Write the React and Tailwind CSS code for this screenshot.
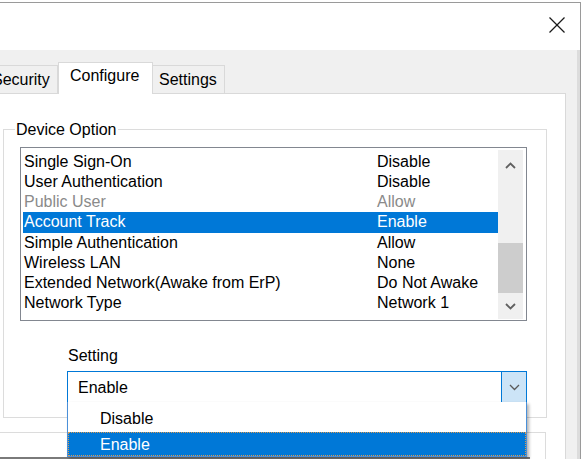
import React from "react";

const rows = [
  ["Single Sign-On", "Disable", "normal"],
  ["User Authentication", "Disable", "normal"],
  ["Public User", "Allow", "disabled"],
  ["Account Track", "Enable", "selected"],
  ["Simple Authentication", "Allow", "normal"],
  ["Wireless LAN", "None", "normal"],
  ["Extended Network(Awake from ErP)", "Do Not Awake", "normal"],
  ["Network Type", "Network 1", "normal"],
];

function Chevron({ up, className, color = "#606060", w = 1.8 }) {
  return (
    <svg width="11" height="7" viewBox="0 0 11 7" className={className}>
      <polyline
        points={up ? "1,6 5.5,1.5 10,6" : "1,1 5.5,5.5 10,1"}
        fill="none"
        stroke={color}
        strokeWidth={w}
      />
    </svg>
  );
}

export default function App() {
  return (
    <div
      className="w-[583px] h-[459px] overflow-hidden bg-white text-[16px] leading-[20px] text-black"
      style={{ fontFamily: '"Liberation Sans", Arial, sans-serif' }}
    >
      <div className="mt-[2px] w-[581px] h-[457px] border-t border-r border-[#9a9a9a] flex flex-col">
        {/* title bar */}
        <div className="h-[47px] bg-white flex justify-end items-start pt-[14px] pr-[15px] shrink-0">
          <svg width="16" height="16" viewBox="0 0 16 16">
            <line x1="0.5" y1="0.5" x2="15.5" y2="15.5" stroke="#1a1a1a" strokeWidth="1.2" />
            <line x1="15.5" y1="0.5" x2="0.5" y2="15.5" stroke="#1a1a1a" strokeWidth="1.2" />
          </svg>
        </div>
        {/* body */}
        <div className="flex-1 bg-[#f0f0f0] border-r-[3px] border-[#dcdcdc] flex flex-col pt-[12px] min-h-0">
          {/* tabs */}
          <div className="flex items-end h-[31px] shrink-0 relative z-10">
            <div className="ml-[-15px] w-[73px] h-[28px] border border-b-0 border-[#d9d9d9] bg-[#f0f0f0] pl-[6px] pt-[4px] whitespace-nowrap">
              Security
            </div>
            <div className="w-[95px] h-[32px] -mb-[1px] border border-b-0 border-[#d9d9d9] bg-white pl-[11px] pt-[3px] whitespace-nowrap">
              Configure
            </div>
            <div className="w-[72px] h-[28px] border border-b-0 border-l-0 border-[#d9d9d9] bg-[#f0f0f0] pl-[6px] pt-[4px] whitespace-nowrap">
              Settings
            </div>
          </div>
          {/* panel */}
          <div className="ml-[-2px] w-[568px] flex-1 border border-[#d9d9d9] bg-white flex flex-col">
            <fieldset className="ml-[4px] mt-[25px] w-[544px] h-[299px] border border-[#dcdcdc] shrink-0">
              <legend className="ml-[11px] px-[1px] leading-[21px]">Device Option</legend>
              {/* listbox */}
              <div className="ml-[16px] mt-[7px] w-[507px] h-[174px] border border-[#828790] bg-white pt-[2px] pl-[2px] pr-[3px] pb-[1px] flex">
                <div className="w-[475px] pt-[2px]">
                  {rows.map(([a, b, s]) => (
                    <div
                      key={a}
                      className={
                        "flex h-[20.15px] items-center whitespace-nowrap " +
                        (s === "selected"
                          ? "bg-[#0078d7] text-white"
                          : s === "disabled"
                          ? "text-[#8a8a8a]"
                          : "text-black")
                      }
                    >
                      <div className="w-[354px] pl-[1px]">{a}</div>
                      <div>{b}</div>
                    </div>
                  ))}
                </div>
                <div className="w-[25px] h-[169px] bg-[#f0f0f0] flex flex-col">
                  <div className="h-[30px] flex items-center justify-center">
                    <Chevron up />
                  </div>
                  <div className="flex-1" />
                  <div className="h-[50px] bg-[#cdcdcd]" />
                  <div className="h-[26px] flex items-center justify-center">
                    <Chevron />
                  </div>
                </div>
              </div>
              {/* setting */}
              <div className="ml-[63px] mt-[25px] w-[460px]">
                <div className="pl-[1px]">Setting</div>
                <div className="relative mt-[5px] h-[32px] border border-[#0078d7] bg-white flex">
                  <div className="flex-1 flex items-center pl-[10px] pt-[1px]">Enable</div>
                  <div className="w-[25px] bg-[#cce4f7] border-l border-[#0078d7] flex items-center justify-center">
                    <Chevron color="#5a5a5a" w={1.3} />
                  </div>
                  {/* dropdown */}
                  <div className="absolute left-[-1px] right-[-1px] top-full z-20 bg-white border border-t-0 border-[#4a90d9] pt-[3px] shadow-[2px_2px_3px_rgba(0,0,0,0.3)]">
                    <div className="h-[27px] pl-[32px] pt-[4px]">Disable</div>
                    <div className="h-[24px] flex items-center pl-[31px] pt-[1px] bg-[#0078d7] text-white border border-dotted border-[#d99a50]">
                      Enable
                    </div>
                  </div>
                </div>
              </div>
            </fieldset>
            {/* lower box */}
            <div className="ml-[-10px] mt-[14px] w-[557px] flex-1 border border-[#dcdcdc]">
              <div className="mt-[24px] w-[540px] border-t-2 border-[#7a7a7a]" />
            </div>
          </div>
        </div>
      </div>
    </div>
  );
}
